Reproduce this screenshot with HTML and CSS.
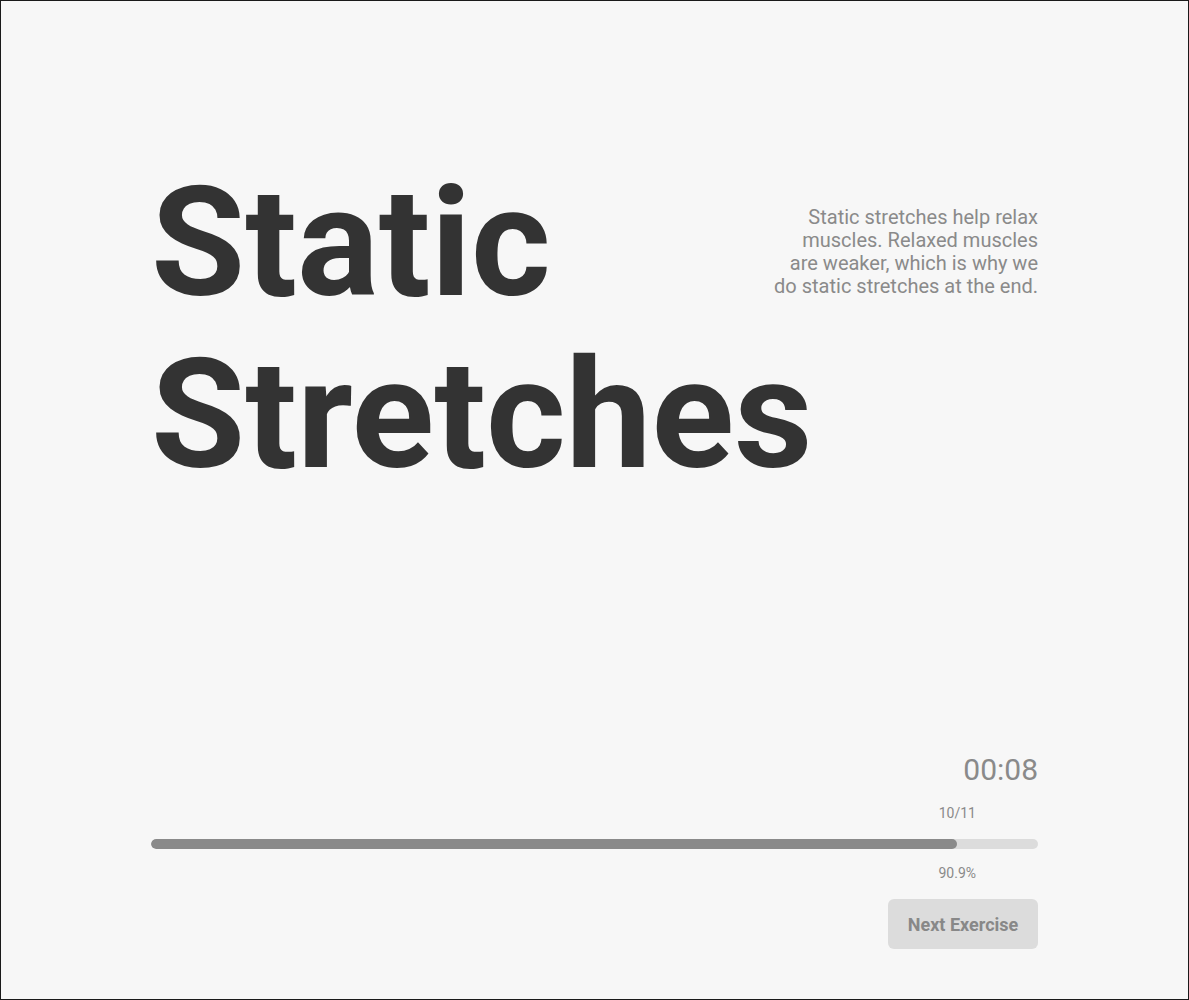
FILE: index.html
```html
<!DOCTYPE html>
<html lang="en">
<head>
<meta charset="utf-8">
<title>Static Stretches</title>
<link rel="stylesheet" href="styles.css">
</head>
<body>
<main class="page">
  <section class="hero">
    <h1 class="title"><span class="title-line">Static</span> <span class="title-line">Stretches</span></h1>
    <p class="desc">Static stretches help relax muscles. Relaxed muscles are weaker, which is why we do static stretches at the end.</p>
  </section>
  <section class="controls">
    <div class="timer">00:08</div>
    <div class="progress">
      <span class="label label-top" style="left: 90.9%">10/11</span>
      <div class="track"><div class="fill" style="width: 90.9%"></div></div>
      <span class="label label-bottom" style="left: 90.9%">90.9%</span>
    </div>
    <div class="actions">
      <button class="next" type="button">Next Exercise</button>
    </div>
  </section>
</main>
</body>
</html>
```

FILE: styles.css
```css
* { box-sizing: border-box; }
html, body { margin: 0; padding: 0; }
body {
  height: 100vh;
  border: 1px solid #1a1a1a;
  background: #f7f7f7;
  font-family: Roboto, "Liberation Sans", sans-serif;
  color: #333;
}
.page {
  width: 887px;
  height: 100%;
  margin: 0 auto;
  padding: 156px 0 50px;
  display: flex;
  flex-direction: column;
  justify-content: space-between;
}
.hero {
  display: flex;
  justify-content: space-between;
  align-items: flex-start;
}
.title {
  flex: 1;
  min-width: 0;
  margin: 0;
  font-size: 153px;
  line-height: 172px;
  font-weight: 700;
  color: #333;
}
.title-line {
  display: block;
  width: max-content;
}
.desc {
  flex: none;
  margin: 49px 0 0;
  width: 268px;
  text-align: right;
  font-size: 20px;
  line-height: 23px;
  color: #8a8a8a;
}
.controls {
  display: flex;
  flex-direction: column;
}
.timer {
  text-align: right;
  font-size: 30px;
  line-height: 36px;
  color: #8a8a8a;
}
.progress {
  position: relative;
  padding: 51px 0 50px;
}
.track {
  height: 10px;
  border-radius: 5px;
  background: #dcdcdc;
  overflow: hidden;
}
.fill {
  height: 100%;
  background: #8a8a8a;
  border-radius: 5px;
}
.label {
  position: absolute;
  transform: translateX(-50%);
  font-size: 14px;
  line-height: 16px;
  color: #8a8a8a;
}
.label-top { top: 17px; }
.label-bottom { bottom: 18px; }
.actions {
  display: flex;
  justify-content: flex-end;
}
.next {
  width: 150px;
  height: 50px;
  border: none;
  border-radius: 6px;
  background: #dcdcdc;
  color: #888;
  font-family: Roboto, "Liberation Sans", sans-serif;
  font-weight: 700;
  font-size: 18px;
  padding: 0;
}
```
